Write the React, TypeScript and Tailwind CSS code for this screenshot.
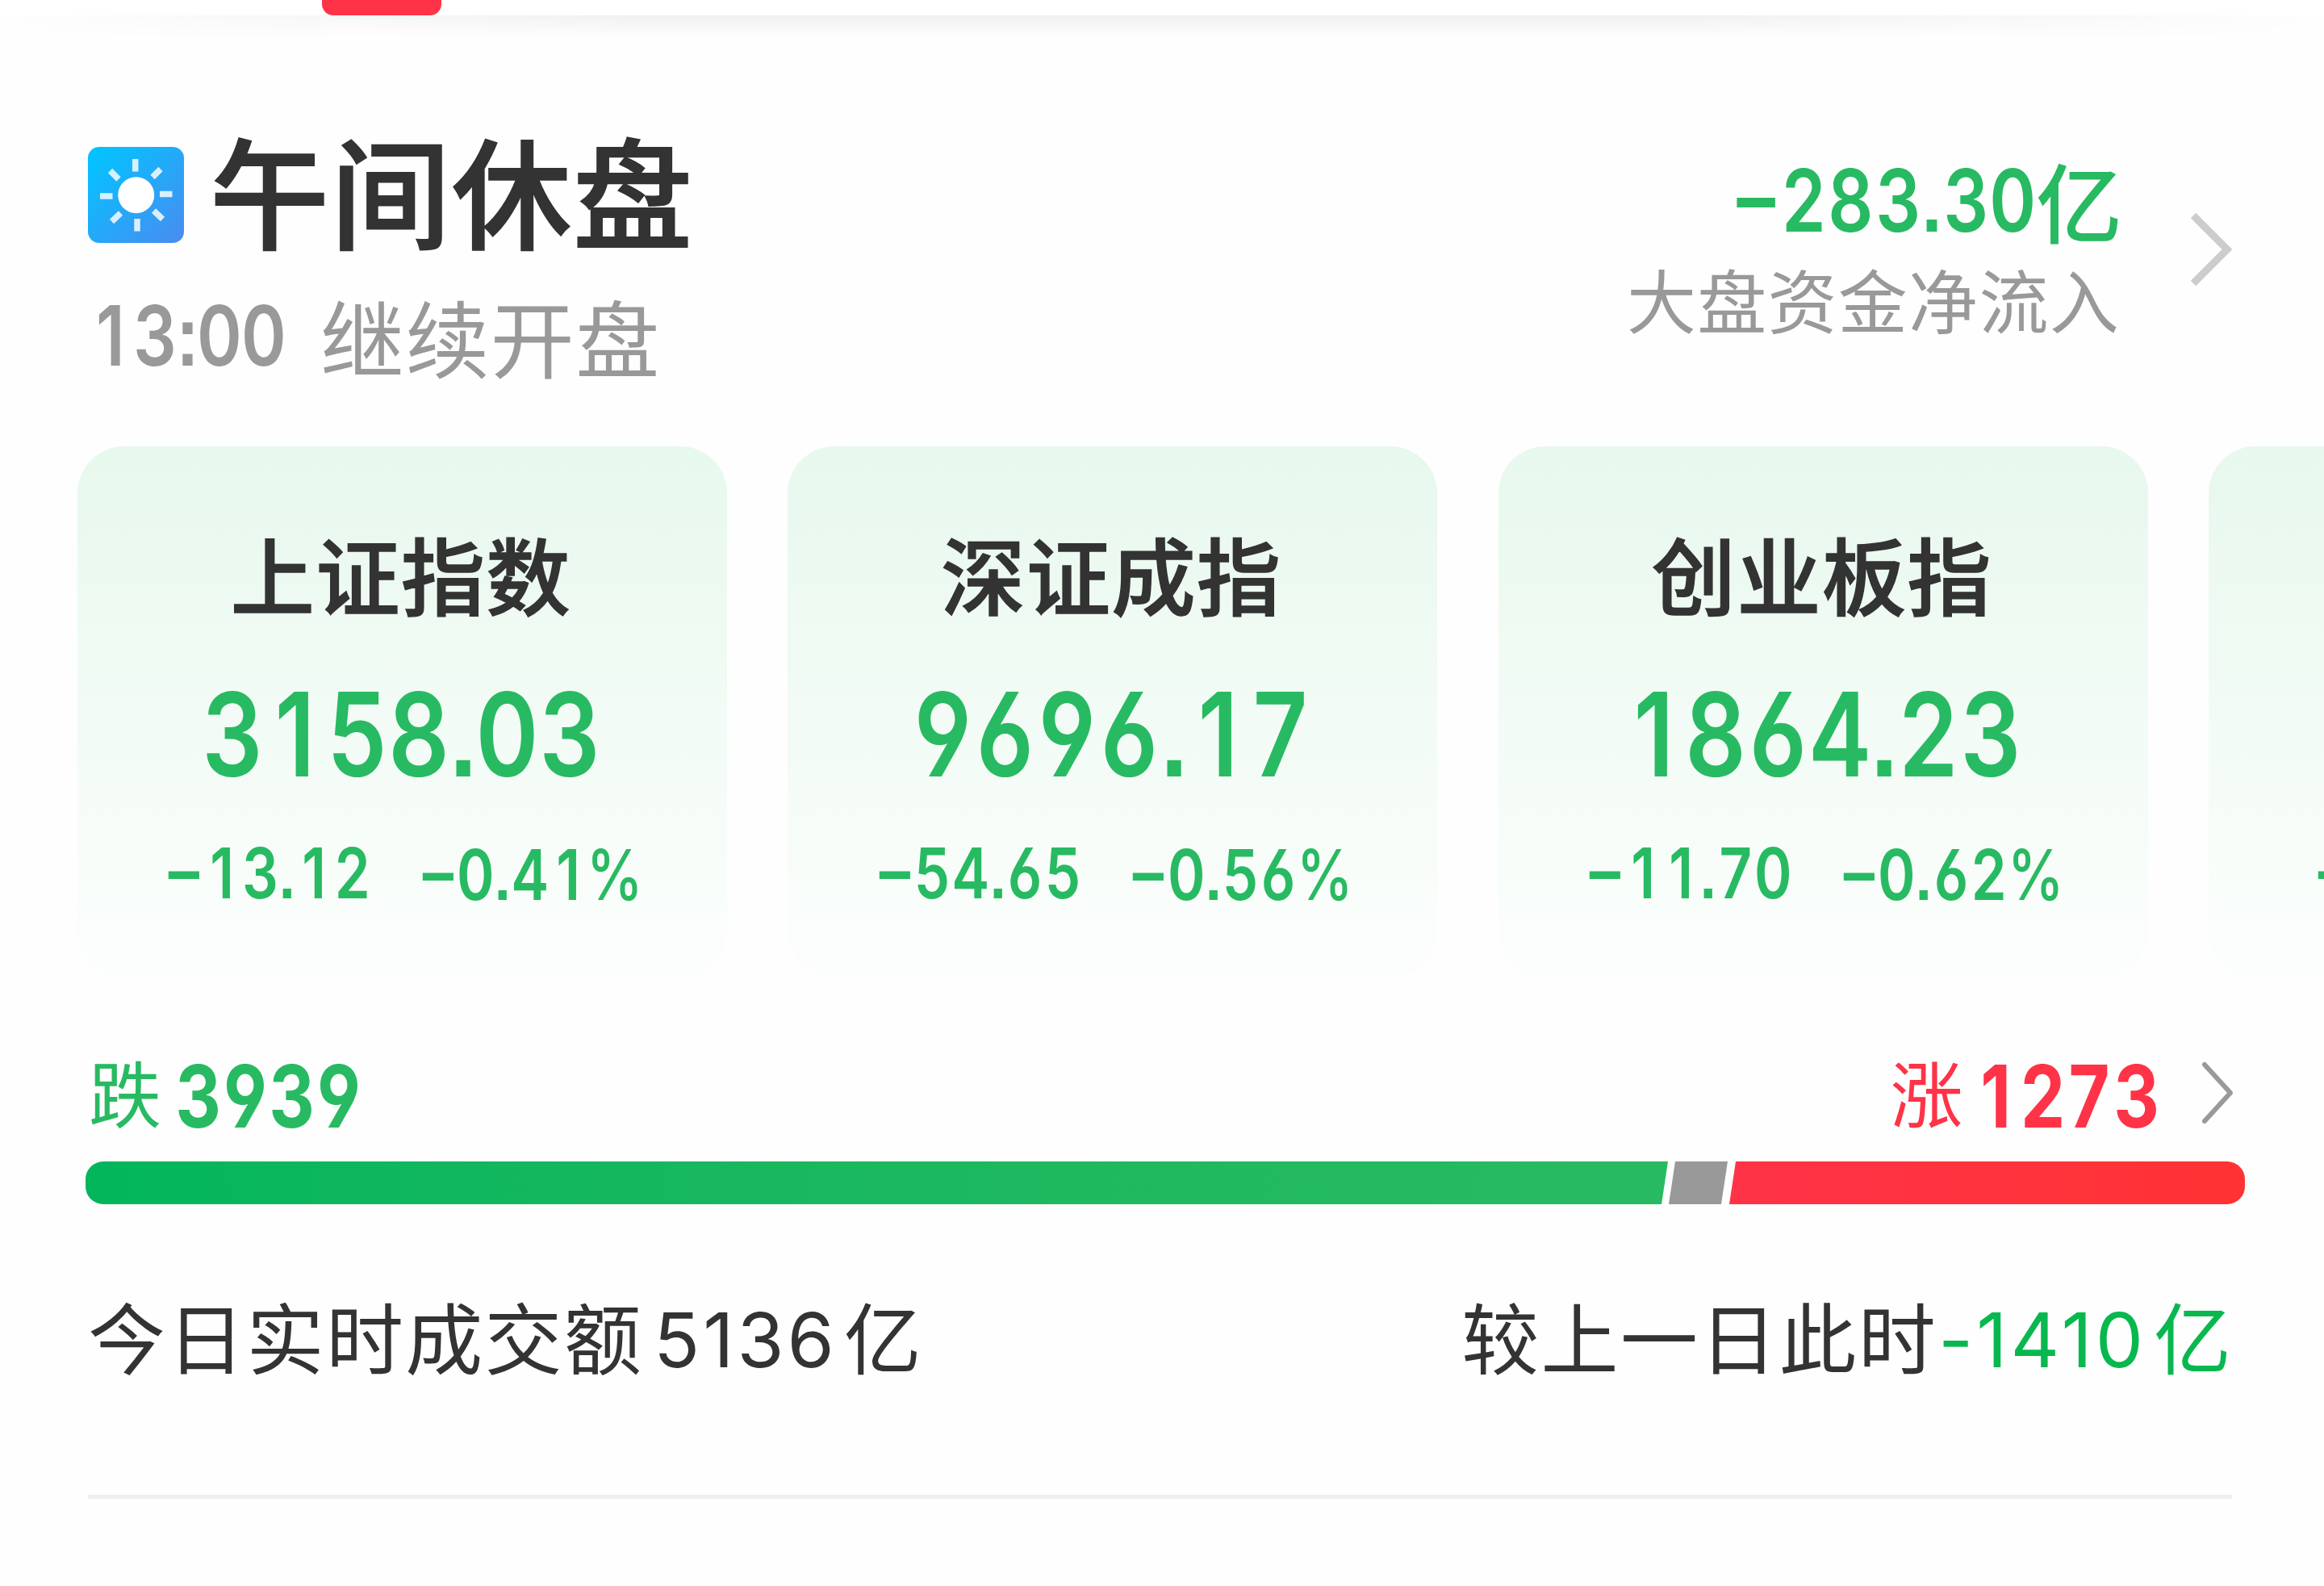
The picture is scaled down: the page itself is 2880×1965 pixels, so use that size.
import { clsx } from 'clsx';

interface IndexQuote {
  name: string;
  value: string;
  change: string;
  percent: string;
}

const QUOTES: IndexQuote[] = [
  { name: '上证指数', value: '3158.03', change: '−13.12', percent: '−0.41%' },
  { name: '深证成指', value: '9696.17', change: '−54.65', percent: '−0.56%' },
  { name: '创业板指', value: '1864.23', change: '−11.70', percent: '−0.62%' },
];

const CARD =
  'flex h-[658px] w-[805px] shrink-0 flex-col rounded-[58px] bg-linear-to-b from-[#e7f8ed] via-[#f2fbf5] to-[#fcfefd]';

function cellWidth(ch: string): string {
  if (ch === '.' || ch === ':') return 'w-[0.225em]';
  if (ch === '%') return 'w-[0.78em]';
  return 'w-[0.535em]';
}

function glyphShape(ch: string): string {
  if (ch === '−') return 'scale-x-[0.92] -translate-y-[0.045em]';
  if (ch === '%') return 'scale-x-[0.82] font-medium';
  return 'scale-x-[0.82]';
}

// Condensed tabular figures: every glyph sits centred in its own fixed cell so
// that columns of prices line up whatever digits they hold.
function Figures({ text, className }: { text: string; className?: string }) {
  return (
    <span
      className={clsx(
        "flex font-['Inter',sans-serif] leading-none [font-feature-settings:'cv03','cv04','ss07']",
        className,
      )}
    >
      {[...text].map((ch, i) => (
        <span key={i} className={clsx('flex justify-center', cellWidth(ch))}>
          <span className={glyphShape(ch)}>{ch}</span>
        </span>
      ))}
    </span>
  );
}

function SunIcon() {
  return (
    <svg viewBox="0 0 119 119" className="mt-[25px] size-[119px] shrink-0">
      <defs>
        <linearGradient id="sky" x1="0" y1="0" x2="1" y2="1">
          <stop offset="0.1" stopColor="#06c1ff" />
          <stop offset="1" stopColor="#4a8bf0" />
        </linearGradient>
      </defs>
      <rect width="119" height="119" rx="14" fill="url(#sky)" />
      <circle cx="59.7" cy="59.7" r="22.5" fill="#fff" />
      <g stroke="#fff" strokeOpacity="0.82" strokeWidth="7.5">
        <path d="M58.700 15v15.500M61 89v15.500M15 61h15.500M89 58.500h15.500" />
        <path d="M27.500 29.500l10.500 10.500M90 27.500l-10 10M29.500 92.500l11-10.500M92.500 89.500l-11-10.500" />
      </g>
    </svg>
  );
}

function Header() {
  return (
    <header className="flex h-[507px] justify-between pl-[109px] pt-[111px]">
      <div>
        <div className="flex h-[148px]">
          <SunIcon />
          <h1 className="ml-[32px] mt-0.5 text-[148px] font-medium tracking-[2px] text-[#333] [-webkit-text-stroke:2px_#333]">
            午间休盘
          </h1>
        </div>
        <div className="mt-[59px] flex text-[104px] text-[#999]">
          <Figures text="13:00" className="gap-[0.006em] text-[103px] font-[620]" />
          <span className="ml-[42px] tracking-[1.4px]">继续开盘</span>
        </div>
      </div>
      <div className="flex pr-[109px]">
        <div className="mt-[36px] flex flex-col items-end">
          <div className="-mr-[3px] flex text-[107px] font-medium text-[#28ba62]">
            <Figures text="−283.30" className="mt-0.5 gap-[0.012em] text-[107px] font-[620]" />
            <span>亿</span>
          </div>
          <span className="mt-[25px] text-[86px] tracking-[1.3px] text-[#999]">大盘资金净流入</span>
        </div>
        <svg viewBox="0 0 60 98" className="ml-[84px] mt-[103px] h-[98px] w-[60px]">
          <path d="M7 7l42 42L7 91" fill="none" stroke="#ccc" strokeWidth="9" />
        </svg>
      </div>
    </header>
  );
}

function QuoteCard({ quote }: { quote: IndexQuote }) {
  return (
    <article className={clsx(CARD, 'items-center pt-[105px]')}>
      <h2 className="-ml-[2px] text-[104px] font-medium tracking-[1.6px] text-[#333] [-webkit-text-stroke:1.5px_#333]">
        {quote.name}
      </h2>
      <Figures text={quote.value} className="-ml-0.5 mt-[76px] text-[144px] font-[620] text-[#28ba62]" />
      <div className="ml-1 mt-[57px] flex gap-[60px] text-[86px] font-[600] text-[#28ba62]">
        <Figures text={quote.change} className="gap-[0.012em]" />
        <Figures text={quote.percent} className="mt-[2px] gap-[0.012em]" />
      </div>
    </article>
  );
}

// The next card in the carousel, only its left edge is in view.
function PeekCard() {
  return (
    <article className={clsx(CARD, 'pl-[132px] pt-[486px]')}>
      <Figures text="−" className="text-[86px] font-[600] text-[#28ba62]" />
    </article>
  );
}

function Breadth() {
  return (
    <section className="pl-[106px] pr-[98px] pt-[93px]">
      <div className="flex h-[107px] justify-between pl-1 pr-[11px] text-[90px]">
        <div className="flex text-[#28ba62]">
          <span className="mt-0.5">跌</span>
          <Figures text="3939" className="ml-[17px] mt-px gap-[0.008em] text-[107px] font-bold" />
        </div>
        <div className="flex text-[#ff3347]">
          <span className="mt-0.5">涨</span>
          <Figures text="1273" className="ml-3 mt-px gap-[0.008em] text-[107px] font-bold" />
          <svg viewBox="0 0 44 80" className="ml-[51px] mt-[10px] h-[80px] w-[44px]">
            <path d="M5 5l32 35L5 75" fill="none" stroke="#999" strokeWidth="6" strokeLinecap="round" strokeLinejoin="round" />
          </svg>
        </div>
      </div>
      <div className="mt-7 flex h-[53px] overflow-hidden rounded-[22px]">
        <div className="w-[1961px] bg-linear-to-r from-[#02b65c] to-[#28ba62] [clip-path:polygon(0_0,100%_0,calc(100%-8px)_100%,0_100%)]" />
        <div className="ml-px w-[73px] bg-[#999] [clip-path:polygon(8px_0,100%_0,calc(100%-8px)_100%,0_100%)]" />
        <div className="ml-0.5 grow bg-linear-to-r from-[#ff3347] to-[#ff3333] [clip-path:polygon(8px_0,100%_0,100%_100%,0_100%)]" />
      </div>
    </section>
  );
}

function Turnover() {
  return (
    <section className="ml-[109px] mr-[114px] flex h-[365px] justify-between border-b-[5px] border-[#efefef] pt-[114px] text-[96px] text-[#333]">
      <div className="flex">
        <span className="tracking-[2.3px]">今日实时成交额</span>
        <span className="ml-[13px] mt-[7px] font-['Inter',sans-serif] text-[94px] tracking-[4px]">5136</span>
        <span className="ml-[8px]">亿</span>
      </div>
      <div className="flex pr-px">
        <span className="tracking-[2.3px]">较上一日此时</span>
        <span className="ml-px mt-[7px] font-['Inter',sans-serif] text-[94px] tracking-[4px] text-[#08b84f]">-1410</span>
        <span className="ml-[9px] text-[#08b84f]">亿</span>
      </div>
    </section>
  );
}

export default function App() {
  return (
    <main className="h-[1965px] w-[2880px] overflow-hidden bg-[#fefefe] font-['Noto_Sans_CJK_SC',sans-serif] leading-none">
      <div className="h-[19px] bg-white pl-[399px]">
        <div className="h-[19px] w-[148px] rounded-b-[14px] bg-[#ff3347]" />
      </div>
      <div className="h-[27px] bg-linear-to-b from-[#f0f0f0] to-[#fefefe] [mask-image:linear-gradient(to_right,transparent,black_800px,black_2080px,transparent)]" />
      <Header />
      <div className="flex gap-[75.500px] overflow-hidden pl-[95.500px]">
        {QUOTES.map((q) => (
          <QuoteCard key={q.name} quote={q} />
        ))}
        <PeekCard />
      </div>
      <Breadth />
      <Turnover />
    </main>
  );
}
